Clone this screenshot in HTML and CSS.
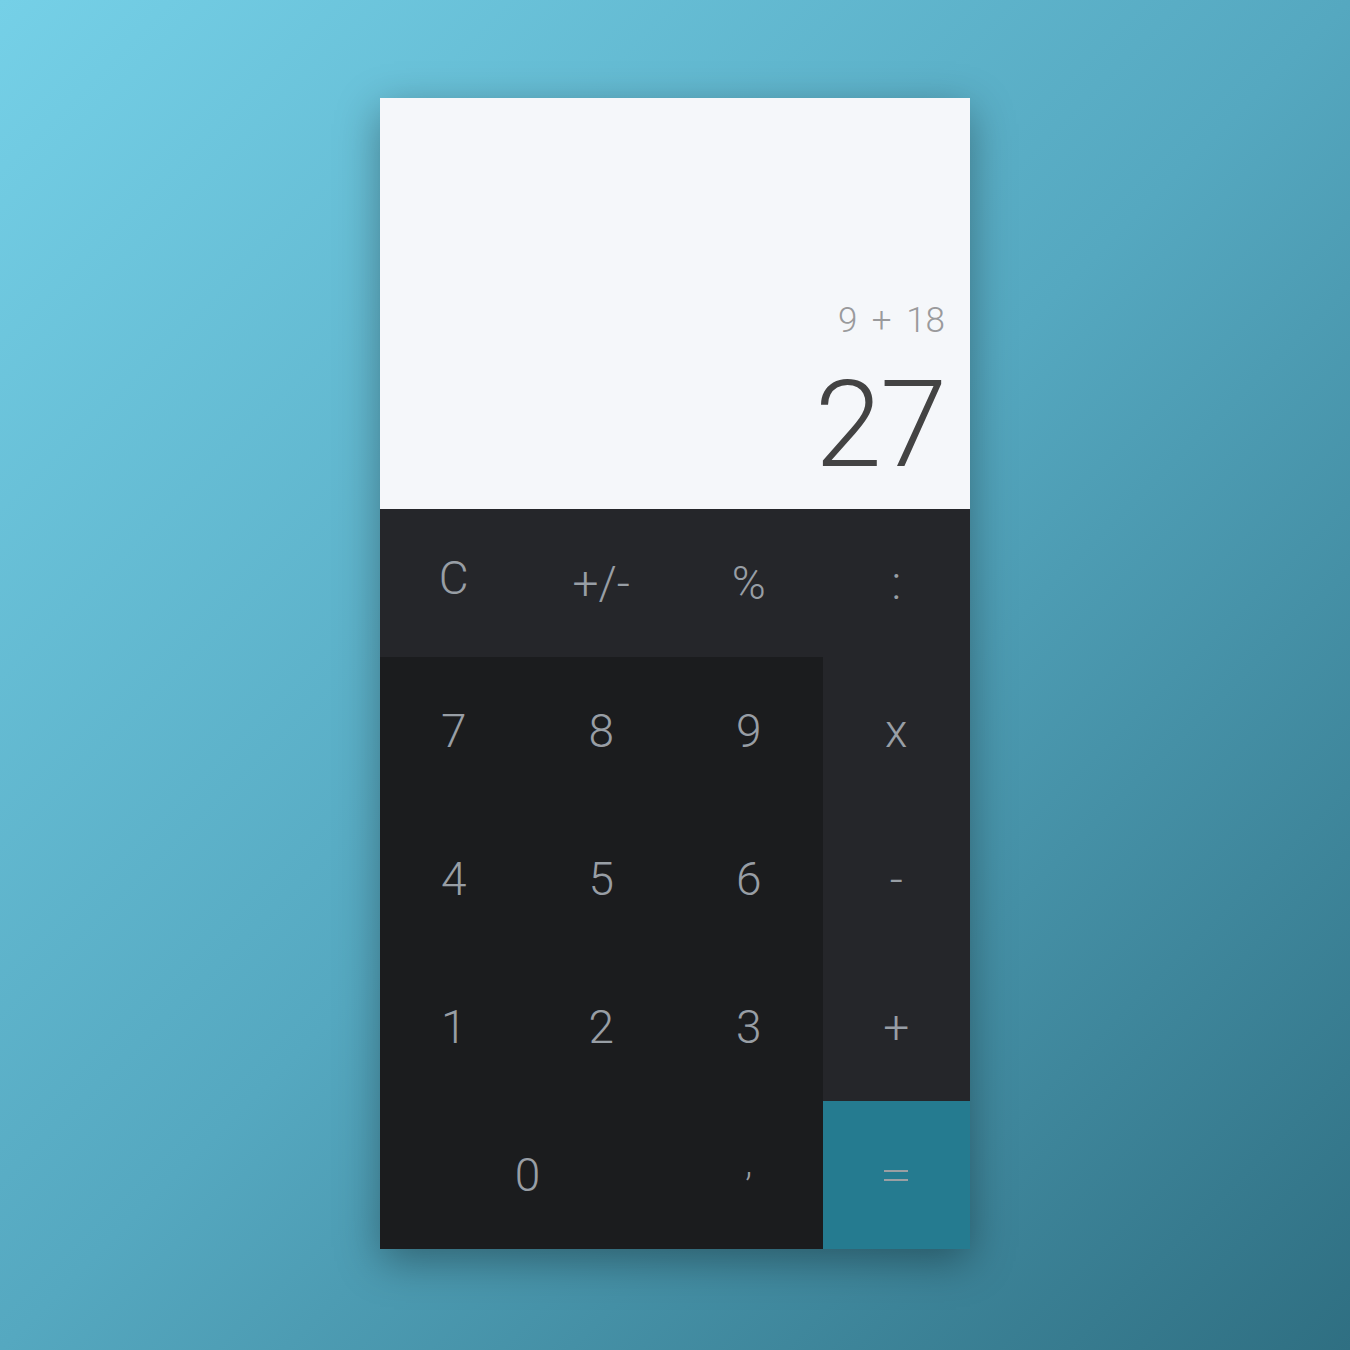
FILE: index.html
```html
<!DOCTYPE html>
<html>
<head>
<meta charset="utf-8">
<link rel="stylesheet" href="styles.css">
</head>
<body>
<div class="calc">
  <div class="display">
    <div class="expr">9 + 18</div>
    <div class="result">27</div>
  </div>
  <div class="keys">
    <div class="key fn">C</div>
    <div class="key fn">+/-</div>
    <div class="key fn">%</div>
    <div class="key op">:</div>
    <div class="key num">7</div>
    <div class="key num">8</div>
    <div class="key num">9</div>
    <div class="key op">x</div>
    <div class="key num">4</div>
    <div class="key num">5</div>
    <div class="key num">6</div>
    <div class="key op">-</div>
    <div class="key num">1</div>
    <div class="key num">2</div>
    <div class="key num">3</div>
    <div class="key op">+</div>
    <div class="key num zero">0</div>
    <div class="key num comma">,</div>
    <div class="key eq"><span class="eqsign"></span></div>
  </div>
</div>
</body>
</html>
```

FILE: styles.css
```css
html, body {
  margin: 0;
  padding: 0;
}
body {
  width: 1350px;
  height: 1350px;
  background: linear-gradient(135deg, #75d0e7 0%, #55a8c0 50%, #2f6f82 100%);
  font-family: Roboto, "Liberation Sans", sans-serif;
  font-weight: 300;
  display: flex;
  justify-content: center;
  align-items: flex-start;
  padding-top: 98px;
  box-sizing: border-box;
}
.calc {
  width: 590px;
  box-shadow: 0 12px 40px rgba(0, 0, 0, 0.35);
}
.display {
  height: 411px;
  background: #f5f7fa;
  box-sizing: border-box;
  padding: 0 25px 24px 0;
  display: flex;
  flex-direction: column;
  justify-content: flex-end;
  align-items: flex-end;
}
.expr {
  font-size: 35px;
  line-height: 40px;
  color: #9a9a9c;
  margin-bottom: 24px;
  word-spacing: 6px;
}
.result {
  font-size: 121px;
  line-height: 120px;
  color: #434343;
  letter-spacing: -2px;
}
.keys {
  display: grid;
  grid-template-columns: repeat(4, 147.5px);
  grid-auto-rows: 148px;
}
.key {
  display: flex;
  align-items: center;
  justify-content: center;
  font-size: 46px;
  color: #989ea5;
}
.fn, .op {
  background: #25262a;
}
.fn:first-child {
  padding-bottom: 10px;
}
.num {
  background: #1b1c1e;
}
.zero {
  grid-column: span 2;
}
.comma {
  font-size: 36px;
  padding-bottom: 24px;
}
.eq {
  background: #257b90;
}
.eqsign {
  width: 24px;
  height: 11px;
  border-top: 2px solid #9a9fa3;
  border-bottom: 2px solid #9a9fa3;
  box-sizing: border-box;
}
```
